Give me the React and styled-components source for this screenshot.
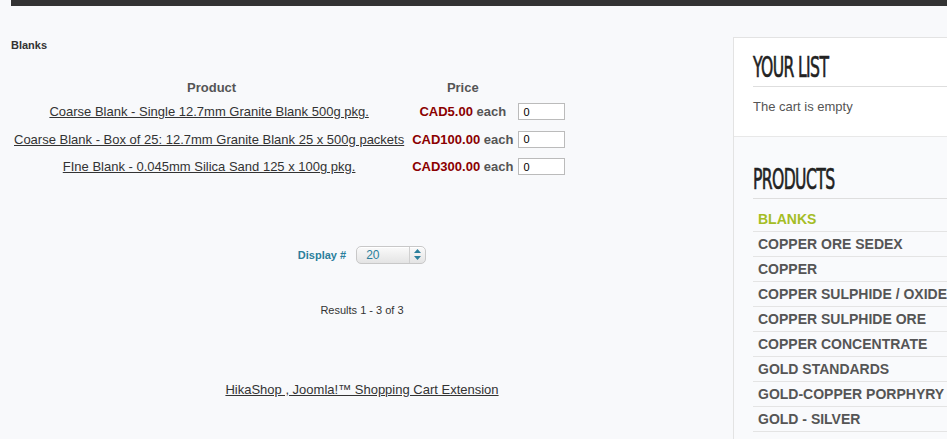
import React from 'react';
import styled, { createGlobalStyle } from 'styled-components';

const GlobalStyle = createGlobalStyle`
  html, body {
    margin: 0;
    padding: 0;
    background: #f8f9fb;
    font-family: 'Liberation Sans', Arial, sans-serif;
    color: #333;
  }
`;

const products = [
  { name: 'Coarse Blank - Single 12.7mm Granite Blank 500g pkg.', price: 'CAD5.00' },
  { name: 'Coarse Blank - Box of 25: 12.7mm Granite Blank 25 x 500g packets', price: 'CAD100.00' },
  { name: 'FIne Blank - 0.045mm Silica Sand 125 x 100g pkg.', price: 'CAD300.00' },
];

const categories = [
  'BLANKS',
  'COPPER ORE SEDEX',
  'COPPER',
  'COPPER SULPHIDE / OXIDE',
  'COPPER SULPHIDE ORE',
  'COPPER CONCENTRATE',
  'GOLD STANDARDS',
  'GOLD-COPPER PORPHYRY',
  'GOLD - SILVER',
];

const App = () => {
  return (
    <>
      <GlobalStyle />
      <TopBar />
      <Page>
        <Main>
          <PageTitle>Blanks</PageTitle>
          <ProductTable>
            <thead>
              <tr>
                <HeadCell>Product</HeadCell>
                <HeadCell>Price</HeadCell>
                <HeadCell />
              </tr>
            </thead>
            <tbody>
              {products.map(p => (
                <tr key={p.name}>
                  <NameCell><ProductLink href="#">{p.name}</ProductLink></NameCell>
                  <PriceCell>
                    <Amount>{p.price}</Amount> each
                  </PriceCell>
                  <QtyCell><QtyInput defaultValue="0" /></QtyCell>
                </tr>
              ))}
            </tbody>
          </ProductTable>

          <DisplayRow>
            <DisplayLabel>Display #</DisplayLabel>
            <Select>
              <SelectValue>20</SelectValue>
              <SelectArrows>
                <svg width="7" height="11" viewBox="0 0 7 11">
                  <path d="M3.5 0 L7 4 H0 Z" fill="#2b7f9c" />
                  <path d="M3.5 11 L7 7 H0 Z" fill="#2b7f9c" />
                </svg>
              </SelectArrows>
            </Select>
          </DisplayRow>

          <Results>Results 1 - 3 of 3</Results>

          <Footer>
            <FooterLink href="#">HikaShop , Joomla!™ Shopping Cart Extension</FooterLink>
          </Footer>
        </Main>

        <Sidebar>
          <Module>
            <ModuleTitle><TitleText>YOUR LIST</TitleText></ModuleTitle>
            <CartText>The cart is empty</CartText>
          </Module>
          <Module $muted>
            <ModuleTitle><TitleText>PRODUCTS</TitleText></ModuleTitle>
            <CategoryList>
              {categories.map((c, i) => (
                <CategoryItem key={c} $active={i === 0}>{c}</CategoryItem>
              ))}
            </CategoryList>
          </Module>
        </Sidebar>
      </Page>
    </>
  );
};
export default App;

const TopBar = styled.div`
  height: 6px;
  margin-left: 11px;
  background: #333;
`;

const Page = styled.div`
  display: flex;
  align-items: flex-start;
  padding-left: 11px;
  gap: 20px;
`;

const Main = styled.div`
  flex: 0 0 702px;
  display: flex;
  flex-direction: column;
`;

const PageTitle = styled.h2`
  margin: 32px 0 0;
  font-size: 11px;
  line-height: 14px;
  font-weight: bold;
  color: #333;
`;

const ProductTable = styled.table`
  margin-top: 24px;
  border-collapse: collapse;
  font-size: 13px;
  align-self: flex-start;
`;

const HeadCell = styled.th`
  height: 22px;
  padding: 0;
  font-weight: bold;
  color: #555;
  text-align: center;
  vertical-align: middle;
`;

const NameCell = styled.td`
  height: 27.5px;
  padding: 0 8px 0 3px;
  text-align: center;
  vertical-align: middle;
`;

const ProductLink = styled.a`
  color: #333;
  text-decoration: underline;
`;

const PriceCell = styled.td`
  padding: 0;
  font-weight: bold;
  color: #555;
  text-align: center;
  white-space: nowrap;
`;

const Amount = styled.span`
  color: #8b0000;
`;

const QtyCell = styled.td`
  padding: 0 2px 0 5px;
`;

const QtyInput = styled.input`
  box-sizing: border-box;
  width: 47px;
  height: 17px;
  padding: 1px 4px;
  border: 1px solid #bbb;
  background: #fff;
  font-family: 'Liberation Sans', Arial, sans-serif;
  font-size: 11px;
  color: #000;
  outline: none;
`;

const DisplayRow = styled.div`
  margin-top: 65px;
  display: flex;
  justify-content: center;
  align-items: center;
  gap: 10px;
`;

const DisplayLabel = styled.span`
  font-size: 11px;
  font-weight: bold;
  color: #2b7f9c;
`;

const Select = styled.div`
  box-sizing: border-box;
  width: 70px;
  height: 18px;
  display: flex;
  align-items: stretch;
  border: 1px solid #c8c8c8;
  border-radius: 5px;
  background: linear-gradient(#fafafa, #e4e4e4);
  box-shadow: inset 0 1px 0 #fff;
`;

const SelectValue = styled.span`
  flex: 1;
  padding-left: 9px;
  font-size: 12px;
  line-height: 16px;
  color: #2b7f9c;
`;

const SelectArrows = styled.span`
  width: 15px;
  display: flex;
  align-items: center;
  justify-content: center;
  border-left: 1px solid #d0d0d0;
`;

const Results = styled.div`
  margin-top: 40px;
  text-align: center;
  font-size: 11px;
  color: #333;
`;

const Footer = styled.div`
  margin-top: 66px;
  text-align: center;
  font-size: 13px;
`;

const FooterLink = styled.a`
  color: #333;
  text-decoration: underline;
`;

const Sidebar = styled.aside`
  flex: 0 0 240px;
  margin-top: 31px;
  border: 1px solid #e3e3e3;
  border-right: none;
  background: #fff;
`;

const Module = styled.div`
  padding: ${p => (p.$muted ? '27px 0 20px 19px' : '14px 0 22px 19px')};
  background: ${p => (p.$muted ? '#f9fafc' : '#fff')};
  border-top: ${p => (p.$muted ? '1px solid #e8e8e8' : 'none')};
`;

const ModuleTitle = styled.h3`
  margin: 0;
  padding-bottom: 2px;
  border-bottom: 1px solid #dedede;
  font-family: 'DejaVu Sans Condensed', 'Liberation Sans Narrow', sans-serif;
  font-weight: normal;
  font-size: 28px;
  line-height: 32px;
  color: #222;
  white-space: nowrap;
`;

const TitleText = styled.span`
  display: inline-block;
  letter-spacing: -1px;
  transform: scaleX(0.62);
  transform-origin: left center;
  -webkit-text-stroke: 0.6px #222;
`;

const CartText = styled.div`
  margin-top: 12px;
  font-size: 13px;
  color: #555;
`;

const CategoryList = styled.ul`
  margin: 8px 0 0;
  padding: 0;
  list-style: none;
`;

const CategoryItem = styled.li`
  height: 25px;
  box-sizing: border-box;
  padding-left: 5px;
  border-bottom: 1px solid #e4e4e4;
  font-size: 14px;
  font-weight: bold;
  line-height: 24px;
  white-space: nowrap;
  color: ${p => (p.$active ? '#a5bd25' : '#555')};
`;
